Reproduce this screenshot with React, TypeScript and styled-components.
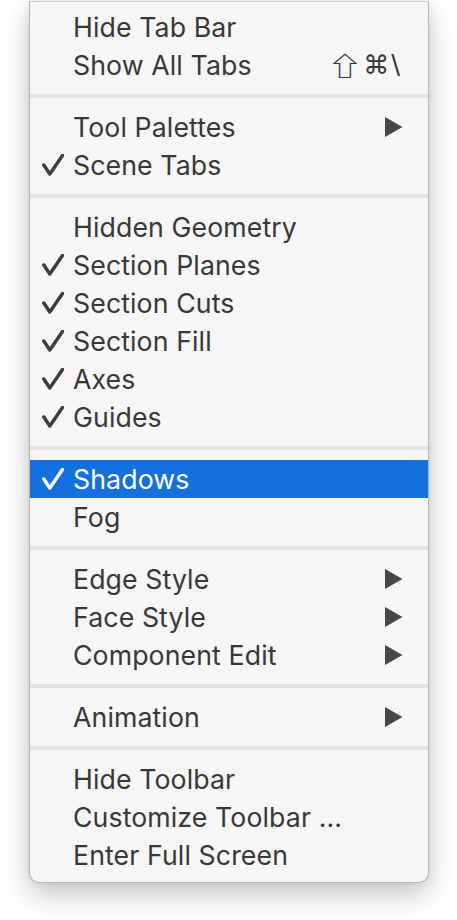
import React from 'react'
import styled, { createGlobalStyle } from 'styled-components'

const GlobalStyle = createGlobalStyle`
  html, body {
    margin: 0;
    padding: 0;
    background: #ffffff;
  }
  body {
    font-family: Inter, "Noto Sans", "Liberation Sans", sans-serif;
  }
`

const Page = styled.div`
  width: 457px;
  height: 920px;
  padding: 1px 28px 0 29px;
  box-sizing: border-box;
`

const Menu = styled.div`
  width: 400px;
  box-sizing: border-box;
  background: #f6f6f6;
  border: 1px solid #b4b4b4;
  border-top-color: #cfcfcf;
  border-radius: 0 0 10px 10px;
  padding: 6px 0 8px;
  box-shadow: 0 12px 28px rgba(0, 0, 0, 0.22), 0 0 10px rgba(0, 0, 0, 0.08);
`

const Separator = styled.div`
  height: 4px;
  margin: 10px 0;
  background: #e3e3e3;
`

interface RowProps {
  readonly highlighted?: boolean
}

const StyledRow = styled.div<RowProps>`
  display: flex;
  align-items: center;
  height: 38px;
  padding: 0 25px 0 10px;
  background: ${(props) => (props.highlighted ? '#1470dc' : 'transparent')};
  color: ${(props) => (props.highlighted ? '#ffffff' : '#383838')};
`

const CheckSlot = styled.div`
  width: 33px;
  height: 22px;
  display: flex;
  align-items: center;
  justify-content: flex-start;
  padding-left: 2px;
  box-sizing: border-box;
`

const Label = styled.span`
  flex: 1;
  font-size: 26.7px;
  letter-spacing: 0.1px;
  line-height: 38px;
  white-space: nowrap;
`

const Shortcut = styled.span`
  display: flex;
  align-items: center;
  gap: 2px;
  font-size: 26px;
  line-height: 38px;
  margin-right: 3px;
`

const ShortcutKey = styled.span<{ wide?: boolean }>`
  display: inline-block;
  font-family: ${(props) =>
    props.wide ? '"Noto Sans CJK JP", "DejaVu Sans", sans-serif' : '"DejaVu Sans", sans-serif'};
  transform: ${(props) => (props.wide ? 'scaleX(1.4)' : 'none')};
  margin-right: ${(props) => (props.wide ? '3px' : '0')};
`

const Check = ({ color }: { color: string }) => (
  <svg width="22" height="22" viewBox="0 0 22 22">
    <path
      d="M1.8 11 L7.8 20 L20.5 1.5"
      fill="none"
      stroke={color}
      strokeWidth="3.4"
      strokeLinecap="round"
      strokeLinejoin="round"
    />
  </svg>
)

const Arrow = ({ color }: { color: string }) => (
  <svg width="18" height="20" viewBox="0 0 18 20">
    <polygon points="0,0 17.5,10 0,20" fill={color} />
  </svg>
)

type ItemType = {
  label: string
  checked?: boolean
  highlighted?: boolean
  submenu?: boolean
  shortcut?: string[]
}

const groups: ItemType[][] = [
  [{ label: 'Hide Tab Bar' }, { label: 'Show All Tabs', shortcut: ['⇧', '⌘', '\\'] }],
  [{ label: 'Tool Palettes', submenu: true }, { label: 'Scene Tabs', checked: true }],
  [
    { label: 'Hidden Geometry' },
    { label: 'Section Planes', checked: true },
    { label: 'Section Cuts', checked: true },
    { label: 'Section Fill', checked: true },
    { label: 'Axes', checked: true },
    { label: 'Guides', checked: true },
  ],
  [{ label: 'Shadows', checked: true, highlighted: true }, { label: 'Fog' }],
  [
    { label: 'Edge Style', submenu: true },
    { label: 'Face Style', submenu: true },
    { label: 'Component Edit', submenu: true },
  ],
  [{ label: 'Animation', submenu: true }],
  [
    { label: 'Hide Toolbar' },
    { label: 'Customize Toolbar ...' },
    { label: 'Enter Full Screen' },
  ],
]

const MenuRow: React.FC<{ item: ItemType }> = ({ item }) => {
  const color = item.highlighted ? '#ffffff' : '#3c3c3c'
  return (
    <StyledRow highlighted={item.highlighted}>
      <CheckSlot>{item.checked && <Check color={color} />}</CheckSlot>
      <Label>{item.label}</Label>
      {item.shortcut && (
        <Shortcut>
          {item.shortcut.map((key) => (
            <ShortcutKey key={key} wide={key === '⇧'}>
              {key}
            </ShortcutKey>
          ))}
        </Shortcut>
      )}
      {item.submenu && <Arrow color={item.highlighted ? '#ffffff' : '#474747'} />}
    </StyledRow>
  )
}

const App: React.FC = () => {
  return (
    <>
      <GlobalStyle />
      <Page>
        <Menu>
          {groups.map((group, i) => (
            <React.Fragment key={i}>
              {i > 0 && <Separator />}
              {group.map((item) => (
                <MenuRow key={item.label} item={item} />
              ))}
            </React.Fragment>
          ))}
        </Menu>
      </Page>
    </>
  )
}

export default App
